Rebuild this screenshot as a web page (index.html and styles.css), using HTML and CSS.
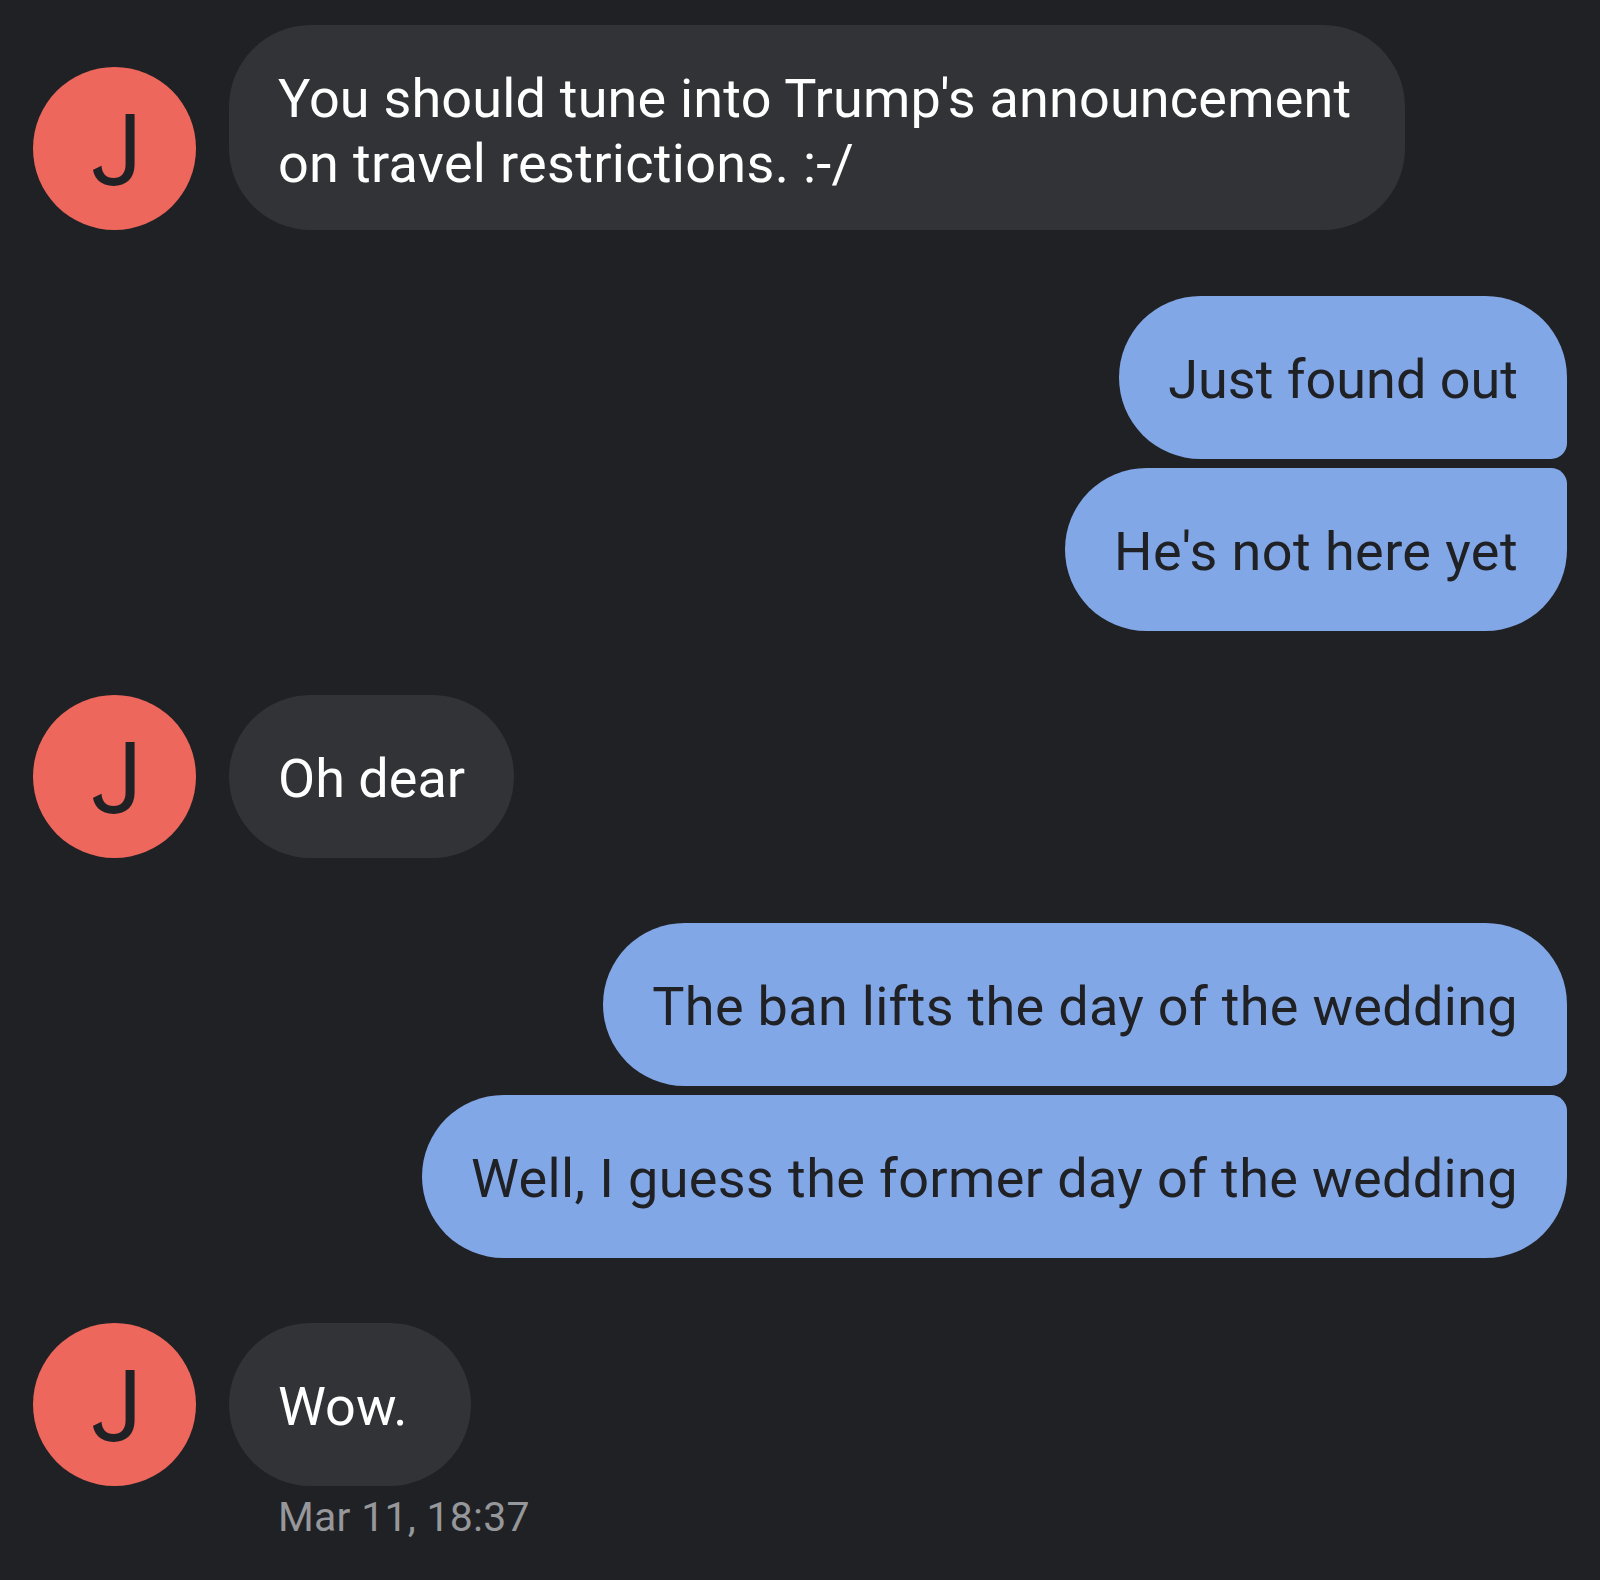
FILE: index.html
```html
<!DOCTYPE html>
<html lang="en">
<head>
<meta charset="utf-8">
<title>Messages</title>
<link rel="stylesheet" href="styles.css">
</head>
<body>
<main class="thread">
  <section class="group incoming lead">
    <div class="avatar"><span class="initial">J</span></div>
    <p class="bubble tall"><span class="track-s">You should tune into Trump's announcement</span><br><span class="track-m">on travel restrictions. :-/</span></p>
  </section>
  <section class="group outgoing reply">
    <p class="bubble first">Just found out</p>
    <p class="bubble last track-xl">He's not here yet</p>
  </section>
  <section class="group incoming">
    <div class="avatar"><span class="initial">J</span></div>
    <p class="bubble">Oh dear</p>
  </section>
  <section class="group outgoing">
    <p class="bubble first track-m">The ban lifts the day of the wedding</p>
    <p class="bubble last track-l">Well, I guess the former day of the wedding</p>
  </section>
  <section class="group incoming">
    <div class="avatar"><span class="initial">J</span></div>
    <p class="bubble short">Wow.</p>
  </section>
  <time class="stamp">Mar 11, 18:37</time>
</main>
</body>
</html>
```
FILE: styles.css
```css
* { box-sizing: border-box; }
body { margin: 0; background: #202125; font-family: Roboto, sans-serif; }
.thread { height: 1580px; padding: 25px 33px 0; overflow: hidden; }
.group { display: flex; margin-bottom: 65px; }
.incoming { align-items: flex-end; gap: 33px; }
.outgoing { flex-direction: column; align-items: flex-end; gap: 9px; }
.lead { margin-bottom: 66px; }
.reply { margin-bottom: 64px; }
.avatar { width: 163px; height: 163px; padding: 2px 0 0 2px; border-radius: 50%; background: #ee675c; color: #202125; display: flex; align-items: center; justify-content: center; font-family: Inter, sans-serif; font-size: 97px; font-weight: 370; line-height: 1; }
/* trims the hook of the initial at a slant */
.initial { clip-path: polygon(50% 0, 110% 0, 110% 110%, -10% 110%, -10% 74px, 50% 58px); }
.bubble { margin: 0; height: 163px; padding: 51px 49px 0; border-radius: 82px; font-size: 54px; line-height: 65px; white-space: nowrap; }
.tall { width: 1176px; height: 205px; padding-top: 41px; }
.short { width: 242px; }
.incoming .bubble { background: #323336; color: #fff; }
.outgoing .bubble { background: #82a7e6; color: #202125; }
.outgoing .first { border-bottom-right-radius: 16px; }
.outgoing .last { border-top-right-radius: 16px; }
.group:last-of-type { margin-bottom: 0; }
.track-s { letter-spacing: 0.18px; }
.track-m { letter-spacing: 0.31px; }
.track-l { letter-spacing: 0.37px; }
.track-xl { letter-spacing: 0.42px; }
.stamp { display: block; margin: 7px 0 0 245px; font-size: 41px; line-height: 48px; letter-spacing: 0.25px; color: #96979a; }
```
